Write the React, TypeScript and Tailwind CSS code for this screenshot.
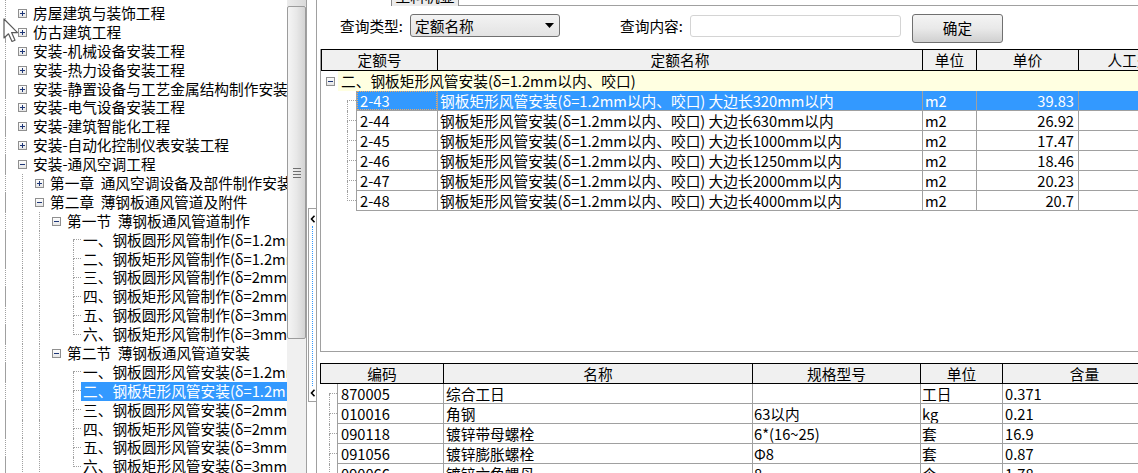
import React from 'react';

const FONT = "font-['Noto_Sans_CJK_SC',sans-serif]";

type TreeNode = {
  text: string;
  level: number;
  kind: 'plus' | 'minus' | 'leaf';
  guides: boolean[];
  pos?: 'first' | 'mid' | 'last';
  selected?: boolean;
};

const root = (text: string, kind: 'plus' | 'minus' = 'plus'): TreeNode => ({ text, level: 0, kind, guides: [true] });
const leaf = (text: string, pos: 'first' | 'mid' | 'last', selected = false): TreeNode => ({
  text,
  level: 3,
  kind: 'leaf',
  guides: [true, true, true, false],
  pos,
  selected,
});

const tree: TreeNode[] = [
  root('房屋建筑与装饰工程'),
  root('仿古建筑工程'),
  root('安装-机械设备安装工程'),
  root('安装-热力设备安装工程'),
  root('安装-静置设备与工艺金属结构制作安装工程'),
  root('安装-电气设备安装工程'),
  root('安装-建筑智能化工程'),
  root('安装-自动化控制仪表安装工程'),
  root('安装-通风空调工程', 'minus'),
  { text: '第一章  通风空调设备及部件制作安装', level: 1, kind: 'plus', guides: [true, true] },
  { text: '第二章  薄钢板通风管道及附件', level: 1, kind: 'minus', guides: [true, true] },
  { text: '第一节  薄钢板通风管道制作', level: 2, kind: 'minus', guides: [true, true, true] },
  leaf('一、钢板圆形风管制作(δ=1.2mm以内、咬口)', 'first'),
  leaf('二、钢板矩形风管制作(δ=1.2mm以内、咬口)', 'mid'),
  leaf('三、钢板圆形风管制作(δ=2mm以内、焊接)', 'mid'),
  leaf('四、钢板矩形风管制作(δ=2mm以内、焊接)', 'mid'),
  leaf('五、钢板圆形风管制作(δ=3mm以内、焊接)', 'mid'),
  leaf('六、钢板矩形风管制作(δ=3mm以内、焊接)', 'last'),
  { text: '第二节  薄钢板通风管道安装', level: 2, kind: 'minus', guides: [true, true, true] },
  leaf('一、钢板圆形风管安装(δ=1.2mm以内、咬口)', 'first'),
  leaf('二、钢板矩形风管安装(δ=1.2mm以内、咬口)', 'mid', true),
  leaf('三、钢板圆形风管安装(δ=2mm以内、焊接)', 'mid'),
  leaf('四、钢板矩形风管安装(δ=2mm以内、焊接)', 'mid'),
  leaf('五、钢板圆形风管安装(δ=3mm以内、焊接)', 'mid'),
  leaf('六、钢板矩形风管安装(δ=3mm以内、焊接)', 'last'),
];

const quotas = [
  ['2-43', '320mm', '39.83'],
  ['2-44', '630mm', '26.92'],
  ['2-45', '1000mm', '17.47'],
  ['2-46', '1250mm', '18.46'],
  ['2-47', '2000mm', '20.23'],
  ['2-48', '4000mm', '20.7'],
];

const materials = [
  ['870005', '综合工日', '', '工日', '0.371'],
  ['010016', '角钢', '63以内', 'kg', '0.21'],
  ['090118', '镀锌带母螺栓', '6*(16~25)', '套', '16.9'],
  ['091056', '镀锌膨胀螺栓', 'Φ8', '套', '0.87'],
  ['090066', '镀锌六角螺母', '8', '个', '1.78'],
];

function ExpandBox({ plus }: { plus: boolean }) {
  return (
    <svg width="9" height="9" viewBox="0 0 9 9" className="shrink-0">
      <defs>
        <linearGradient id="bx" x1="0" y1="0" x2="0" y2="1">
          <stop offset="0" stopColor="#ffffff" />
          <stop offset="1" stopColor="#e4e4e4" />
        </linearGradient>
      </defs>
      <rect x="0.5" y="0.5" width="8" height="8" fill="url(#bx)" stroke="#8f8f8f" />
      <path d="M2 4.5h5" stroke="#1d3677" />
      {plus && <path d="M4.5 2v5" stroke="#1d3677" />}
    </svg>
  );
}

function Connector({ pos, width }: { pos: 'first' | 'mid' | 'last'; width: string }) {
  return (
    <div className={'flex h-full shrink-0 flex-col ' + width}>
      <div
        className={
          'h-1/2 border-b border-dotted border-[#a0a0a0] ' + (pos !== 'first' ? 'border-l' : '')
        }
      />
      <div className={'h-1/2 ' + (pos !== 'last' ? 'border-l border-dotted border-[#a0a0a0]' : '')} />
    </div>
  );
}

function TreeRow({ n }: { n: TreeNode }) {
  return (
    <div className="flex h-[18.9px] items-center overflow-hidden whitespace-pre">
      <div className="h-full w-[5px] shrink-0" />
      {n.guides.map((on, i) => (
        <div
          key={i}
          className={'h-full w-[17px] shrink-0 ' + (on ? 'border-l border-dotted border-[#a0a0a0]' : '')}
        />
      ))}
      {n.kind === 'leaf' ? (
        <Connector pos={n.pos!} width="w-[8px]" />
      ) : (
        <div className="-ml-[4px] flex w-[15px] shrink-0 items-center">
          <ExpandBox plus={n.kind === 'plus'} />
        </div>
      )}
      <div
        className={
          'h-full flex-1 overflow-hidden leading-[18.9px] ' +
          (n.kind === 'leaf' ? 'pl-[2px] ' : '') +
          (n.selected ? 'bg-[#3399ff] text-white' : 'text-black')
        }
      >
        {n.text}
      </div>
    </div>
  );
}

function Chevron() {
  return (
    <svg width="6" height="8" viewBox="0 0 6 8" className="shrink-0">
      <path d="M4.5 0.8 L1.5 4 L4.5 7.2" fill="none" stroke="#000" strokeWidth="1.6" />
    </svg>
  );
}

function Cursor() {
  return (
    <svg
      width="17"
      height="26"
      viewBox="0 0 17 26"
      className="pointer-events-none absolute left-[3px] top-[18px]"
    >
      <path
        d="M1 1 L1 20 L5.5 15.8 L9 23.5 L12 22.2 L8.6 14.6 L14.5 14.6 Z"
        fill="#ffffff"
        stroke="#5a5a5a"
        strokeWidth="1.2"
        strokeLinejoin="round"
      />
    </svg>
  );
}

export default function App() {
  return (
    <div className={'relative flex h-[473px] w-[1138px] overflow-hidden bg-white text-[14.7px] text-black ' + FONT}>
      {/* tree */}
      <div className="relative h-full w-[287px] shrink-0 overflow-hidden">
        <div className="absolute left-[5px] top-0 h-full border-l border-dotted border-[#a0a0a0]" />
        <div className="relative pt-[4px]">
          {tree.map((n, i) => (
            <TreeRow key={i} n={n} />
          ))}
        </div>
        <Cursor />
      </div>

      {/* scrollbar */}
      <div className="flex h-full w-[19px] shrink-0 flex-col bg-[#f0f0f0]">
        <div className="h-[6px] bg-linear-to-r from-[#ececec] to-[#dadada]" />
        <div className="flex h-[333px] flex-col items-center justify-center gap-[2px] rounded-[2px] border border-[#9c9c9c] bg-linear-to-r from-[#f5f5f5] via-[#e8e8e8] to-[#d4d4d4]">
          <div className="h-px w-[8px] bg-[#707070]" />
          <div className="h-px w-[8px] bg-[#707070]" />
          <div className="h-px w-[8px] bg-[#707070]" />
          <div className="h-px w-[8px] bg-[#707070]" />
        </div>
      </div>

      {/* splitter */}
      <div className="h-full w-[10px] shrink-0 border-l border-[#a0a0a0] pl-[1px]">
        <div className="mt-[208px] flex h-[194px] w-[8px] flex-col items-center border-y border-l border-[#a0a0a0] pb-[4px] pt-[6px]">
          <Chevron />
          <div className="my-[3px] flex-1 border-l border-dotted border-[#3399ff]" />
          <Chevron />
        </div>
      </div>

      {/* right pane */}
      <div className="h-full flex-1 overflow-hidden border-l border-[#a0a0a0] pl-[3px]">
        {/* tab strip */}
        <div className="flex h-[6px]">
          <div className="ml-[71px] h-full w-[68px] overflow-hidden border-x border-[#8a8a8a] bg-[#ececec] text-center">
            <div className="-mt-[13px] leading-[18px]">工料机显示</div>
          </div>
          <div className="h-full flex-1 border-b border-[#a0a0a0]" />
        </div>

        {/* query bar */}
        <div className="flex h-[43px] items-start whitespace-nowrap pl-[20px]">
          <div className="mt-[8px] h-[23px] w-[70px] leading-[23px]">查询类型:</div>
          <div className="mt-[8px] flex h-[23px] w-[150px] items-center justify-between rounded-[3px] border border-[#707070] bg-linear-to-b from-[#f3f3f3] to-[#e3e3e3] pl-[4px] pr-[5px]">
            <span className="leading-[21px]">定额名称</span>
            <svg width="9" height="5" viewBox="0 0 9 5">
              <path d="M0 0 H9 L4.5 5 Z" fill="#000" />
            </svg>
          </div>
          <div className="ml-[60px] mt-[8px] h-[23px] w-[70px] leading-[23px]">查询内容:</div>
          <div className="mt-[9px] h-[22px] w-[211px] rounded-[3px] border border-[#d4d4d4] bg-white" />
          <button className="ml-[11px] mt-[8px] flex h-[29px] w-[91px] items-center justify-center rounded-[3px] border border-[#707070] bg-linear-to-b from-[#f4f4f4] via-[#e9e9e9] to-[#d0d0d0]">
            确定
          </button>
        </div>

        {/* quota table */}
        <div className="h-[303px] overflow-hidden whitespace-nowrap border-b border-l border-[#a0a0a0]">
          <div className="flex h-[22px] border-y border-l border-black bg-[#f0f0f0] leading-[20px]">
            <div className="w-[116px] shrink-0 border-r border-black text-center">定额号</div>
            <div className="w-[485px] shrink-0 border-r border-black text-center">定额名称</div>
            <div className="w-[54px] shrink-0 border-r border-black text-center">单位</div>
            <div className="w-[102px] shrink-0 border-r border-black text-center">单价</div>
            <div className="w-[102px] shrink-0 border-r border-black text-center">人工费</div>
          </div>
          <div className="flex h-[20px]">
            <div className="flex w-[17px] shrink-0 items-center pl-[5px]">
              <ExpandBox plus={false} />
            </div>
            <div className="flex-1 overflow-hidden bg-[#ffffe1] pl-[3px] leading-[20px]">
              二、钢板矩形风管安装(δ=1.2mm以内、咬口)
            </div>
          </div>
          {quotas.map(([code, size, price], i) => {
            const sel = i === 0;
            const cell = 'h-full shrink-0 overflow-hidden border-b border-r border-[#a0a0a0] leading-[19px] ';
            const tone = sel ? 'bg-[#3399ff] text-white ' : '';
            return (
              <div key={code} className="flex h-[20px]">
                <div className="flex h-full w-[35px] shrink-0 pl-[26px]">
                  <Connector pos={i === 0 ? 'first' : i === quotas.length - 1 ? 'last' : 'mid'} width="w-[9px]" />
                </div>
                <div className={cell + tone + 'w-[82px] border-l'}>
                  <div
                    className={
                      'h-full ' + (sel ? 'border border-dotted border-[#f0a860] pl-[2px] leading-[17px]' : 'pl-[3px]')
                    }
                  >
                    {code}
                  </div>
                </div>
                <div className={cell + tone + 'w-[485px] pl-[2px]'}>
                  钢板矩形风管安装(δ=1.2mm以内、咬口) 大边长{size}以内
                </div>
                <div className={cell + tone + 'w-[54px] pl-[2px]'}>m2</div>
                <div className={cell + tone + 'w-[102px] pr-[4px] text-right'}>{price}</div>
                <div className={cell + tone + 'w-[102px]'} />
              </div>
            );
          })}
        </div>

        {/* material table */}
        <div className="mt-[11px] whitespace-nowrap">
          <div className="flex h-[21px] border-y border-l border-black bg-[#f0f0f0] leading-[19px]">
            <div className="w-[123px] shrink-0 border-r border-black text-center">编码</div>
            <div className="w-[309px] shrink-0 border-r border-black text-center">名称</div>
            <div className="w-[168px] shrink-0 border-r border-black text-center">规格型号</div>
            <div className="w-[82px] shrink-0 border-r border-black text-center">单位</div>
            <div className="w-[164px] shrink-0 border-r border-black text-center">含量</div>
          </div>
          {materials.map(([code, name, spec, unit, amount], i) => {
            const cell = 'h-full shrink-0 overflow-hidden border-b border-r border-[#a0a0a0] leading-[19px] ';
            return (
              <div key={code} className="flex h-[20px]">
                <div className="flex h-full w-[17px] shrink-0 pl-[9px]">
                  <Connector pos={i === 0 ? 'first' : 'mid'} width="w-[8px]" />
                </div>
                <div className={cell + 'w-[107px] border-l pl-[3px]'}>{code}</div>
                <div className={cell + 'w-[309px] pl-[2px]'}>{name}</div>
                <div className={cell + 'w-[168px] pl-[1px]'}>{spec}</div>
                <div className={cell + 'w-[82px] pl-[1px]'}>{unit}</div>
                <div className={cell + 'w-[164px] pl-[2px]'}>{amount}</div>
              </div>
            );
          })}
        </div>
      </div>
    </div>
  );
}
